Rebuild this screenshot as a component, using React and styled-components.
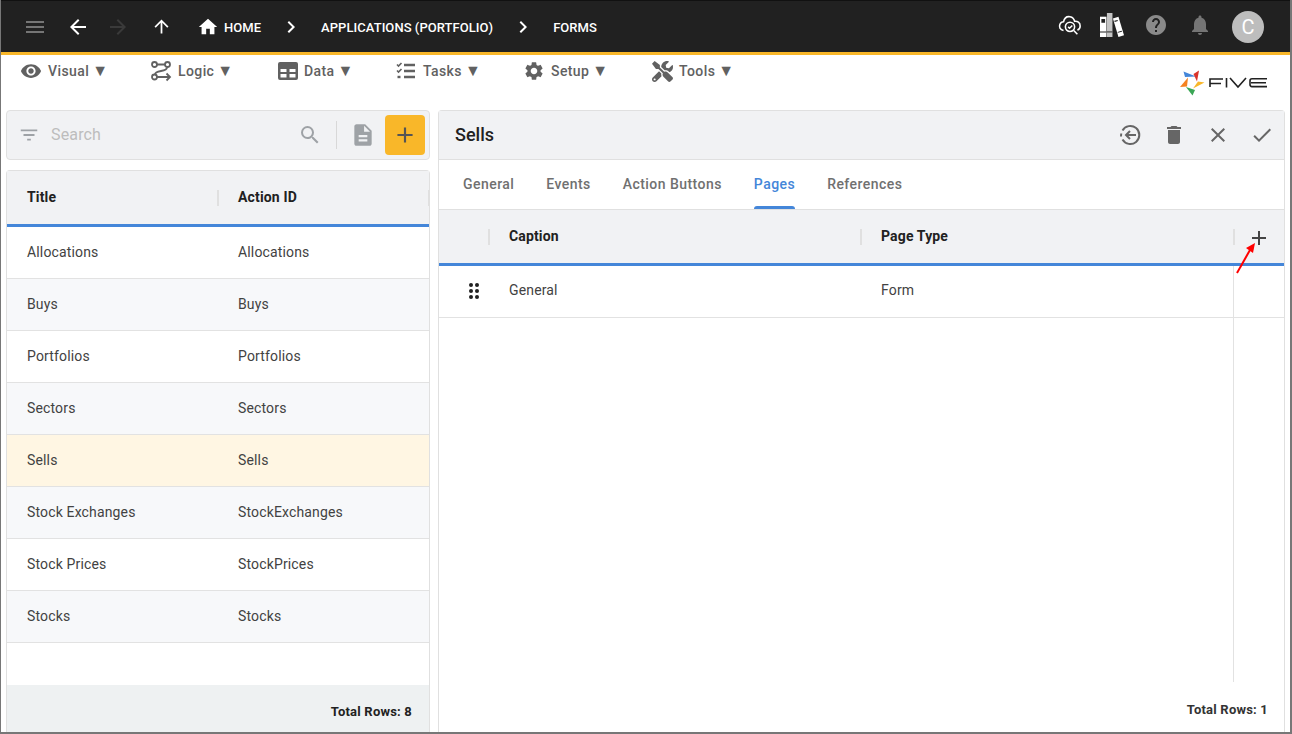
import React from 'react'
import styled, { createGlobalStyle } from 'styled-components'
import {
    MdMenu, MdArrowBack, MdArrowForward, MdArrowUpward, MdHome, MdChevronRight,
    MdHelp, MdNotifications, MdVisibility, MdSettings, MdSearch,
    MdFilterList, MdDescription, MdAdd, MdDelete, MdClose, MdCheck,
} from 'react-icons/md'
import { FaTools } from 'react-icons/fa'

const GlobalStyle = createGlobalStyle`
    html, body {
        margin: 0;
        padding: 0;
        background: #fff;
    }
    * {
        box-sizing: border-box;
    }
`

const Frame = styled.div`
    position: relative;
    width: 1292px;
    height: 734px;
    overflow: hidden;
    display: flex;
    flex-direction: column;
    background: #fff;
    border-left: 1px solid #777;
    border-right: 2px solid #777;
    border-bottom: 2px solid #777;
    font-family: Roboto, "Liberation Sans", sans-serif;
    font-size: 14px;
`

const Header = styled.header`
    height: 55px;
    flex: none;
    display: flex;
    align-items: center;
    background: #212121;
    border-top: 1px solid #111;
    border-bottom: 3px solid #f9b729;
    padding-left: 22px;
    color: #fff;
`

const NavIcon = styled.span`
    display: flex;
    justify-content: center;
    width: 24px;
    margin-right: ${p => p.$gap}px;
    margin-bottom: ${p => p.$up || 0}px;
    color: ${p => p.$color || '#fff'};
    font-size: ${p => p.$size || 24}px;
`

const Crumb = styled.span`
    font-size: 13px;
    font-weight: 500;
    letter-spacing: 0.05px;
    color: #fff;
    padding-top: 2px;
    margin-right: ${p => p.$gap}px;
`

const HeaderRight = styled.div`
    margin-left: auto;
    display: flex;
    align-items: center;
    padding-right: 26px;
`

const Avatar = styled.div`
    width: 32px;
    height: 32px;
    border-radius: 50%;
    background: #bdbdbd;
    color: #fff;
    font-size: 20px;
    display: flex;
    align-items: center;
    justify-content: center;
    margin-left: 20px;
`

const Toolbar = styled.nav`
    height: 55px;
    flex: none;
    display: flex;
    align-items: flex-start;
    padding: 5px 0 0 19px;
`

const MenuItem = styled.div`
    width: ${p => p.$width}px;
    height: 22px;
    display: flex;
    align-items: center;
    color: #616161;
    font-size: 14px;
    font-weight: 500;
    letter-spacing: 0.4px;
    svg {
        flex: none;
        margin-right: 6px;
    }
`

const Caret = styled.span`
    margin-left: 3px;
    font-size: 16px;
    line-height: 22px;
`

const LogoBox = styled.div`
    margin-left: auto;
    margin-right: 22px;
    margin-top: 10px;
`

const Main = styled.main`
    flex: 1;
    min-height: 0;
    display: flex;
    gap: 8px;
    padding-left: 5px;
    padding-right: 5px;
`

const LeftColumn = styled.section`
    width: 424px;
    flex: none;
    display: flex;
    flex-direction: column;
    gap: 10px;
`

const SearchBar = styled.div`
    height: 50px;
    flex: none;
    display: flex;
    align-items: center;
    background: #f1f2f4;
    border: 1px solid #e0e0e0;
    border-radius: 4px;
    padding: 0 4px 0 11px;
    color: #9ea2a6;
`

const SearchText = styled.span`
    margin-left: 11px;
    padding-bottom: 2px;
    font-size: 16px;
    letter-spacing: 0.15px;
    color: #bdbdbd;
    flex: 1;
`

const Divider = styled.span`
    width: 1px;
    height: 28px;
    background: #d8d8d8;
    margin: 0 13px 0 14px;
`

const AddButton = styled.div`
    width: 40px;
    height: 40px;
    margin-left: 9px;
    display: flex;
    align-items: center;
    justify-content: center;
    background: #f9b729;
    border-radius: 4px;
    color: #555;
    font-size: 26px;
`

const Card = styled.div`
    flex: 1;
    min-height: 0;
    display: flex;
    flex-direction: column;
    border: 1px solid #e0e0e0;
    border-bottom: 0;
    border-radius: 4px 4px 0 0;
    background: #fff;
`

const TableHead = styled.div`
    height: 56px;
    flex: none;
    display: flex;
    align-items: center;
    background: #f1f2f4;
    border-bottom: 3px solid #4486d9;
    color: #212121;
    font-size: 14px;
    font-weight: 700;
    letter-spacing: 0.15px;
`

const HeadCell = styled.div`
    width: ${p => p.$width}px;
    flex: none;
    height: 16px;
    display: flex;
    align-items: center;
    padding-left: ${p => p.$pad || 0}px;
    padding-bottom: 1px;
    border-right: 2px solid #e0e0e0;
`

const Rows = styled.div`
    flex: 1;
    min-height: 0;
`

const Row = styled.div`
    height: 52px;
    display: flex;
    align-items: center;
    padding-bottom: ${p => p.$lift}px;
    border-bottom: 1px solid #e2e2e2;
    color: #424242;
    font-size: 14px;
    letter-spacing: 0.15px;
    background: ${p => (p.$selected ? '#fff6e3' : p.$alt ? '#f7f8fa' : '#fff')};
`

const Cell = styled.div`
    width: ${p => p.$width}px;
    padding-left: ${p => p.$pad || 0}px;
    flex: none;
`

const LeftFooter = styled.div`
    height: 47px;
    flex: none;
    display: flex;
    align-items: center;
    justify-content: flex-end;
    padding: 5px 17px 0 0;
    background: #eef1f2;
    color: #212121;
    font-size: 13px;
    font-weight: 700;
    letter-spacing: 0.2px;
`

const RightPanel = styled(Card)`
    position: relative;
`

const TitleBar = styled.div`
    height: 49px;
    flex: none;
    display: flex;
    align-items: center;
    background: #f1f2f4;
    border-bottom: 1px solid #e0e0e0;
    padding: 0 10px 0 16px;
`

const Title = styled.h2`
    margin: 0;
    padding-bottom: 2px;
    flex: 1;
    font-size: 18px;
    font-weight: 500;
    color: #212121;
`

const ActionIcon = styled.span`
    display: flex;
    width: 24px;
    margin-left: 20px;
    color: #666;
    font-size: 24px;
`

const Tabs = styled.div`
    height: 50px;
    flex: none;
    display: flex;
    gap: 32px;
    padding-left: 24px;
    border-bottom: 1px solid #e0e0e0;
`

const Tab = styled.div`
    position: relative;
    height: 49px;
    display: flex;
    align-items: center;
    padding-bottom: 2px;
    font-size: 14px;
    font-weight: 500;
    letter-spacing: 0.45px;
    color: ${p => (p.$active ? '#4486d9' : '#707070')};
    &::after {
        content: '';
        display: ${p => (p.$active ? 'block' : 'none')};
        position: absolute;
        left: 0;
        right: 0;
        bottom: 0;
        height: 3px;
        border-radius: 3px 3px 0 0;
        background: #4486d9;
    }
`

const PlusButton = styled.div`
    flex: 1;
    display: flex;
    justify-content: center;
    margin: 2px 2px 0 0;
    color: #444;
    font-size: 24px;
`

const Body = styled.div`
    flex: 1;
    min-height: 0;
    display: flex;
    flex-direction: column;
`

const ColumnLine = styled.div`
    position: absolute;
    left: 794px;
    top: 155px;
    bottom: 50px;
    width: 1px;
    background: #e2e2e2;
`

const RightFooter = styled.div`
    height: 50px;
    flex: none;
    display: flex;
    align-items: center;
    justify-content: flex-end;
    padding: 4px 16px 0 0;
    color: #333;
    font-size: 13px;
    font-weight: 700;
    letter-spacing: 0.2px;
`

const Grip = styled.span`
    display: grid;
    width: 10px;
    grid-template-columns: 4px 4px;
    gap: 2px;
    margin: 2px 0 0 30px;
    i {
        width: 4px;
        height: 4px;
        border-radius: 50%;
        background: #212121;
    }
`

const Arrow = styled.svg`
    position: absolute;
    left: 1235px;
    top: 243px;
`

const LogicIcon = () => (
    <svg width="22" height="22" viewBox="-1 0 22 22" fill="none" stroke="currentColor" strokeWidth="1.8">
        <circle cx="3.500" cy="4.500" r="2.500" />
        <circle cx="16.500" cy="4.500" r="2.500" />
        <circle cx="3.500" cy="17" r="2.500" />
        <path d="M6 4.500h8M16 7.500c0 5-12 2-12 7M6 17h13" />
        <path d="M15.500 13.500L19 17l-3.500 3.500" />
    </svg>
)

const DataIcon = () => (
    <svg width="22" height="22" viewBox="-1 0 22 22">
        <path fill="currentColor" fillRule="evenodd" d="M3 2h16a2 2 0 0 1 2 2v14a2 2 0 0 1-2 2H3a2 2 0 0 1-2-2V4a2 2 0 0 1 2-2zM3.500 9v3h6V9zm9 0v3h6V9zM3.500 14v3.500h6V14zm9 0v3.500h6V14z" />
    </svg>
)

const TasksIcon = () => (
    <svg width="22" height="22" viewBox="0 0 22 22" fill="none" stroke="currentColor">
        <path strokeWidth="2.400" d="M9 5h11M9 11h11M9 17h11" />
        <path strokeWidth="1.600" d="M2 4.500l1.500 1.500L6.500 3M2 10.500L3.500 12l3-3" />
        <path strokeWidth="2.400" d="M2.500 17h3" />
    </svg>
)

const ReturnIcon = () => (
    <svg width="24" height="24" viewBox="0 0 24 24" fill="none" stroke="currentColor" strokeWidth="2">
        <path d="M4.500 7.500A9 9 0 1 1 4.500 16.500" />
        <path d="M3.200 10.500l-.2 3" />
        <path d="M18 12H8M12 8l-4 4 4 4" />
    </svg>
)

const TopIcon = styled.svg`
    display: block;
    margin-top: ${p => p.$shift}px;
`

const CloudIcon = () => (
    <TopIcon $shift={-4} width="26" height="26" viewBox="0 0 26 26" fill="none" stroke="#fff" strokeWidth="1.700">
        <path d="M6 19C2 18 1 15 2 12.500S5 9.500 6 9.500C7 5 10 3.500 13 4c3 .5 4.500 2.500 5 5 3-.5 6 1.500 6 5 0 2.500-1.500 4-3 4.500" />
        <circle cx="13" cy="15" r="5" />
        <path d="M11 15l1.500 1.500L15.500 13.500M17 19l4 4" />
    </TopIcon>
)

const BooksIcon = () => (
    <TopIcon $shift={0} width="26" height="26" viewBox="0 0 26 26">
        <path fill="#fff" d="M0 4h7v22H0z" />
        <path fill="#212121" d="M1.500 6.500h4v4h-4zM0 20h7v1H0z" />
        <path fill="#c4c4c4" d="M7.500 0h6v26h-6z" />
        <path fill="#212121" d="M7.500 20h6v1h-6z" />
        <path fill="#fff" d="M14 6l6-2 6 20-6 2z" />
        <path fill="#212121" d="M15.500 8.500l3.500-1 .4 1.200-3.500 1zM19 20.500l4.500-1.300.3 1-4.500 1.300z" />
    </TopIcon>
)

const Logo = () => (
    <svg width="88" height="26" viewBox="0 0 88 26">
        <path fill="#4486d9" d="M3.500 1.500L16 6.500l-11 .5z" />
        <path fill="#d9342b" d="M19 .5l-2 11L13.500 4z" />
        <path fill="#f9b729" d="M24.500 12.500l-11.500 6 5-7z" />
        <path fill="#3aa655" d="M6 17l9 3-2.500 5.500z" />
        <path fill="#f58220" d="M8 7.500L7 16.500l-7 .5z" />
        <g fill="none" stroke="#212121" strokeWidth="1.600">
            <path d="M30 17V9h13M30 13.500h11M46.500 8v9.500M50 8l8 9 8-9" />
            <path d="M87 8.800H72a2 2 0 0 0-2 2v3.800a2 2 0 0 0 2 2h15M71 12.700h15" />
        </g>
    </svg>
)

const menu = [
    { label: 'Visual', width: 130, icon: <MdVisibility size={22} /> },
    { label: 'Logic', width: 126, icon: <LogicIcon /> },
    { label: 'Data', width: 119, icon: <DataIcon /> },
    { label: 'Tasks', width: 128, icon: <TasksIcon /> },
    { label: 'Setup', width: 129, icon: <MdSettings size={22} /> },
    { label: 'Tools', width: 100, icon: <FaTools size={21} /> },
]

const forms = [
    ['Allocations', 'Allocations'],
    ['Buys', 'Buys'],
    ['Portfolios', 'Portfolios'],
    ['Sectors', 'Sectors'],
    ['Sells', 'Sells'],
    ['Stock Exchanges', 'StockExchanges'],
    ['Stock Prices', 'StockPrices'],
    ['Stocks', 'Stocks'],
]

const tabs = ['General', 'Events', 'Action Buttons', 'Pages', 'References']

export default function App() {
    return (
        <Frame>
            <GlobalStyle />
            <Header>
                <NavIcon $gap={19} $color="#757575"><MdMenu /></NavIcon>
                <NavIcon $gap={16}><MdArrowBack /></NavIcon>
                <NavIcon $gap={19} $color="#3a3a3a"><MdArrowForward /></NavIcon>
                <NavIcon $gap={23} $size={21}><MdArrowUpward /></NavIcon>
                <NavIcon $gap={4} $size={22}><MdHome /></NavIcon>
                <Crumb $gap={18}>HOME</Crumb>
                <NavIcon $gap={18}><MdChevronRight /></NavIcon>
                <Crumb $gap={18}>APPLICATIONS (PORTFOLIO)</Crumb>
                <NavIcon $gap={18}><MdChevronRight /></NavIcon>
                <Crumb $gap={0}>FORMS</Crumb>
                <HeaderRight>
                    <NavIcon $gap={18}><CloudIcon /></NavIcon>
                    <NavIcon $gap={20} $up={3}><BooksIcon /></NavIcon>
                    <NavIcon $gap={20} $color="#8a8a8a" $up={4}><MdHelp /></NavIcon>
                    <NavIcon $gap={0} $color="#757575" $up={4}><MdNotifications /></NavIcon>
                    <Avatar>C</Avatar>
                </HeaderRight>
            </Header>
            <Toolbar>
                {menu.map(item => (
                    <MenuItem key={item.label} $width={item.width}>
                        {item.icon}
                        {item.label}
                        <Caret>▼</Caret>
                    </MenuItem>
                ))}
                <LogoBox><Logo /></LogoBox>
            </Toolbar>
            <Main>
                <LeftColumn>
                    <SearchBar>
                        <MdFilterList size={22} />
                        <SearchText>Search</SearchText>
                        <MdSearch size={24} />
                        <Divider />
                        <MdDescription size={26} />
                        <AddButton><MdAdd /></AddButton>
                    </SearchBar>
                    <Card>
                        <TableHead>
                            <HeadCell $width={212} $pad={20}>Title</HeadCell>
                            <HeadCell $width={211} $pad={19}>Action ID</HeadCell>
                        </TableHead>
                        <Rows>
                            {forms.map(([title, action], i) => (
                                <Row key={title} $lift={2} $alt={i % 2 === 1} $selected={title === 'Sells'}>
                                    <Cell $width={231} $pad={20}>{title}</Cell>
                                    <Cell $width={192}>{action}</Cell>
                                </Row>
                            ))}
                        </Rows>
                        <LeftFooter>Total Rows: 8</LeftFooter>
                    </Card>
                </LeftColumn>
                <RightPanel>
                    <TitleBar>
                        <Title>Sells</Title>
                        <ActionIcon><ReturnIcon /></ActionIcon>
                        <ActionIcon><MdDelete /></ActionIcon>
                        <ActionIcon><MdClose /></ActionIcon>
                        <ActionIcon><MdCheck /></ActionIcon>
                    </TitleBar>
                    <Tabs>
                        {tabs.map(tab => <Tab key={tab} $active={tab === 'Pages'}>{tab}</Tab>)}
                    </Tabs>
                    <TableHead>
                        <HeadCell $width={51} />
                        <HeadCell $width={372} $pad={19}>Caption</HeadCell>
                        <HeadCell $width={373} $pad={19}>Page Type</HeadCell>
                        <PlusButton><MdAdd /></PlusButton>
                    </TableHead>
                    <Body>
                        <Row $lift={4}>
                            <Cell $width={70}>
                                <Grip><i /><i /><i /><i /><i /><i /></Grip>
                            </Cell>
                            <Cell $width={372}>General</Cell>
                            <Cell $width={300}>Form</Cell>
                        </Row>
                    </Body>
                    <ColumnLine />
                    <RightFooter>Total Rows: 1</RightFooter>
                </RightPanel>
            </Main>
            <Arrow width="22" height="32" viewBox="0 0 22 32">
                <path d="M1 30L14 7" stroke="#f00" strokeWidth="2" fill="none" />
                <path d="M19 0L10 5l7 5z" fill="#f00" />
            </Arrow>
        </Frame>
    )
}
